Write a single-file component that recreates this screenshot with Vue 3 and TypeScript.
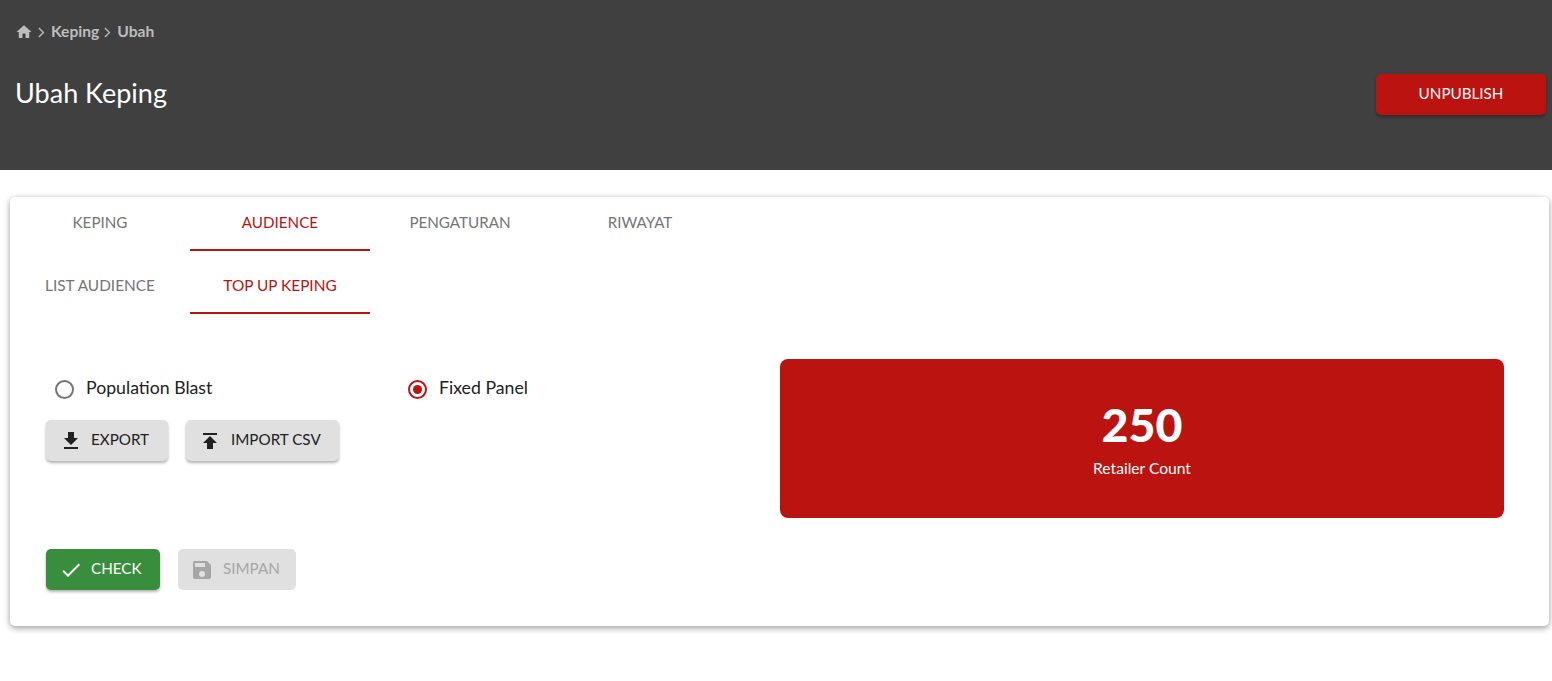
<script setup lang="ts">
const mainTabs = [
  { label: 'Keping', active: false },
  { label: 'Audience', active: true },
  { label: 'Pengaturan', active: false },
  { label: 'Riwayat', active: false }
]

const subTabs = [
  { label: 'List Audience', active: false },
  { label: 'Top Up Keping', active: true }
]
</script>

<template>
  <div class="page">
    <header class="header">
      <nav class="breadcrumb">
        <svg class="home" viewBox="0 0 24 24"><path d="M10 20v-6h4v6h5v-8h3L12 3 2 12h3v8z" /></svg>
        <svg class="chevron" viewBox="0 0 10 10"><path d="M3 1.5 6.5 5 3 8.5" /></svg>
        <span>Keping</span>
        <svg class="chevron" viewBox="0 0 10 10"><path d="M3 1.5 6.5 5 3 8.5" /></svg>
        <span>Ubah</span>
      </nav>
      <div class="title-row">
        <h1>Ubah Keping</h1>
        <button class="btn btn-red">UNPUBLISH</button>
      </div>
    </header>

    <main class="card">
      <div class="tabs">
        <div v-for="tab in mainTabs" :key="tab.label" class="tab" :class="{ active: tab.active }">{{ tab.label }}</div>
      </div>
      <div class="tabs sub">
        <div v-for="tab in subTabs" :key="tab.label" class="tab" :class="{ active: tab.active }">{{ tab.label }}</div>
      </div>

      <section class="content">
        <div class="left">
          <div class="radios">
            <label class="radio">
              <span class="circle"></span>
              Population Blast
            </label>
            <label class="radio checked">
              <span class="circle"></span>
              Fixed Panel
            </label>
          </div>
          <div class="actions">
            <button class="btn btn-grey btn-icon export">
              <svg viewBox="0 0 24 24"><path d="M19 9h-4V3H9v6H5l7 7 7-7zM5 18v2h14v-2H5z" /></svg>
              EXPORT
            </button>
            <button class="btn btn-grey btn-icon wide-gap import">
              <svg viewBox="0 0 24 24"><path d="M5 4v2h14V4H5zm0 10h4v6h6v-6h4l-7-7-7 7z" /></svg>
              IMPORT CSV
            </button>
          </div>
        </div>
        <div class="count-box">
          <div class="count">250</div>
          <div class="count-label">Retailer Count</div>
        </div>
      </section>

      <div class="footer-actions">
        <button class="btn btn-green btn-icon">
          <svg viewBox="0 0 24 24"><path d="M9 16.2 4.8 12l-1.4 1.4L9 19 21 7l-1.4-1.4L9 16.2z" /></svg>
          CHECK
        </button>
        <button class="btn btn-disabled btn-icon wide-gap" disabled>
          <svg viewBox="0 0 24 24"><path d="M17 3H5a2 2 0 0 0-2 2v14a2 2 0 0 0 2 2h14a2 2 0 0 0 2-2V7l-4-4zm-5 16a3 3 0 1 1 0-6 3 3 0 0 1 0 6zm3-10H5V5h10v4z" /></svg>
          SIMPAN
        </button>
      </div>
    </main>
  </div>
</template>

<style>
html,
body {
  margin: 0;
  background: #fff;
}
</style>

<style scoped>
.page {
  font-family: Lato, "Noto Sans", sans-serif;
  color: #212121;
  height: 681px;
  overflow: hidden;
}

.header {
  background: #404040;
  height: 170px;
  box-sizing: border-box;
  padding: 23px 6px 0 15px;
}

.breadcrumb {
  display: flex;
  align-items: center;
  height: 18px;
  color: #bdbdbd;
  font-size: 15.6px;
  font-weight: 700;
}

.breadcrumb span {
  margin-bottom: 2px;
}

.home {
  width: 18px;
  height: 18px;
  fill: #bdbdbd;
}

.chevron {
  width: 13px;
  height: 13px;
  margin: 0 3px 0 2px;
  fill: none;
  stroke: #bdbdbd;
  stroke-width: 1;
}

.title-row {
  display: flex;
  align-items: center;
  justify-content: space-between;
  margin-top: 33px;
}

h1 {
  margin: 0 0 4px;
  color: #fff;
  font-size: 27px;
  font-weight: 400;
  line-height: 37px;
}

.btn {
  display: inline-flex;
  align-items: center;
  justify-content: center;
  height: 41px;
  box-sizing: border-box;
  border: none;
  border-radius: 5px;
  padding: 0 0 3px;
  font-family: inherit;
  font-size: 15.2px;
  font-weight: 400;
  box-shadow: 0 2px 3px rgba(0, 0, 0, 0.3);
}

.btn svg {
  width: 24px;
  height: 24px;
  fill: currentColor;
  margin: 3px 8px 0 0;
}

.btn-icon {
  justify-content: flex-start;
  padding-left: 13px;
}

.wide-gap {
  padding-left: 12px;
}

.wide-gap svg {
  margin-right: 9px;
}

.btn-red {
  width: 170px;
  background: #bb130f;
  color: #fff;
}

.card {
  margin: 27px 3px 0 10px;
  height: 429px;
  border-radius: 5px;
  background: #fff;
  box-shadow: 0 2px 6px rgba(0, 0, 0, 0.4);
}

.tabs {
  display: flex;
  height: 54px;
}

.tabs.sub {
  height: 63px;
}

.tab {
  width: 180px;
  display: flex;
  align-items: center;
  justify-content: center;
  padding-bottom: 3px;
  box-sizing: border-box;
  border-bottom: 2px solid transparent;
  color: #757575;
  font-size: 15.2px;
  text-transform: uppercase;
}

.tabs.sub .tab {
  align-items: flex-start;
  padding-top: 25px;
  padding-bottom: 0;
  font-size: 15.4px;
}

.tab.active {
  color: #bb130f;
  border-bottom-color: #bb130f;
}

.content {
  display: flex;
  justify-content: space-between;
  margin-top: 45px;
  padding: 0 45px 0 36px;
}

.left {
  padding-top: 16px;
}

.radios {
  display: flex;
  height: 28px;
  align-items: center;
  padding-left: 9px;
}

.radio {
  display: flex;
  align-items: center;
  width: 353px;
  font-size: 17.7px;
  line-height: 25px;
  padding-bottom: 3px;
}

.circle {
  width: 19px;
  height: 19px;
  box-sizing: border-box;
  border: 2px solid #757575;
  border-radius: 50%;
  margin: 3px 12px 0 0;
  position: relative;
}

.radio.checked .circle {
  border-color: #bb130f;
}

.radio.checked .circle::after {
  content: "";
  position: absolute;
  inset: 3px;
  border-radius: 50%;
  background: #bb130f;
}

.actions {
  display: flex;
  gap: 18px;
  margin-top: 17px;
}

.btn-grey {
  background: #e0e0e0;
  color: #212121;
}

.export {
  width: 122px;
}

.import {
  width: 153px;
}

.count-box {
  width: 724px;
  height: 159px;
  border-radius: 8px;
  background: #bb130f;
  color: #fff;
  display: flex;
  flex-direction: column;
  align-items: center;
  box-sizing: border-box;
  padding-top: 38px;
}

.count {
  font-size: 46.5px;
  font-weight: 900;
  line-height: 54px;
}

.count-label {
  font-size: 15.6px;
  line-height: 20px;
  margin-top: 7px;
}

.footer-actions {
  display: flex;
  gap: 18px;
  margin-top: 31px;
  padding-left: 36px;
}

.btn-green {
  width: 114px;
  background: #388e3c;
  color: #fff;
}

.btn-disabled {
  width: 118px;
  background: #e0e0e0;
  color: #a6a6a6;
  box-shadow: none;
}
</style>
